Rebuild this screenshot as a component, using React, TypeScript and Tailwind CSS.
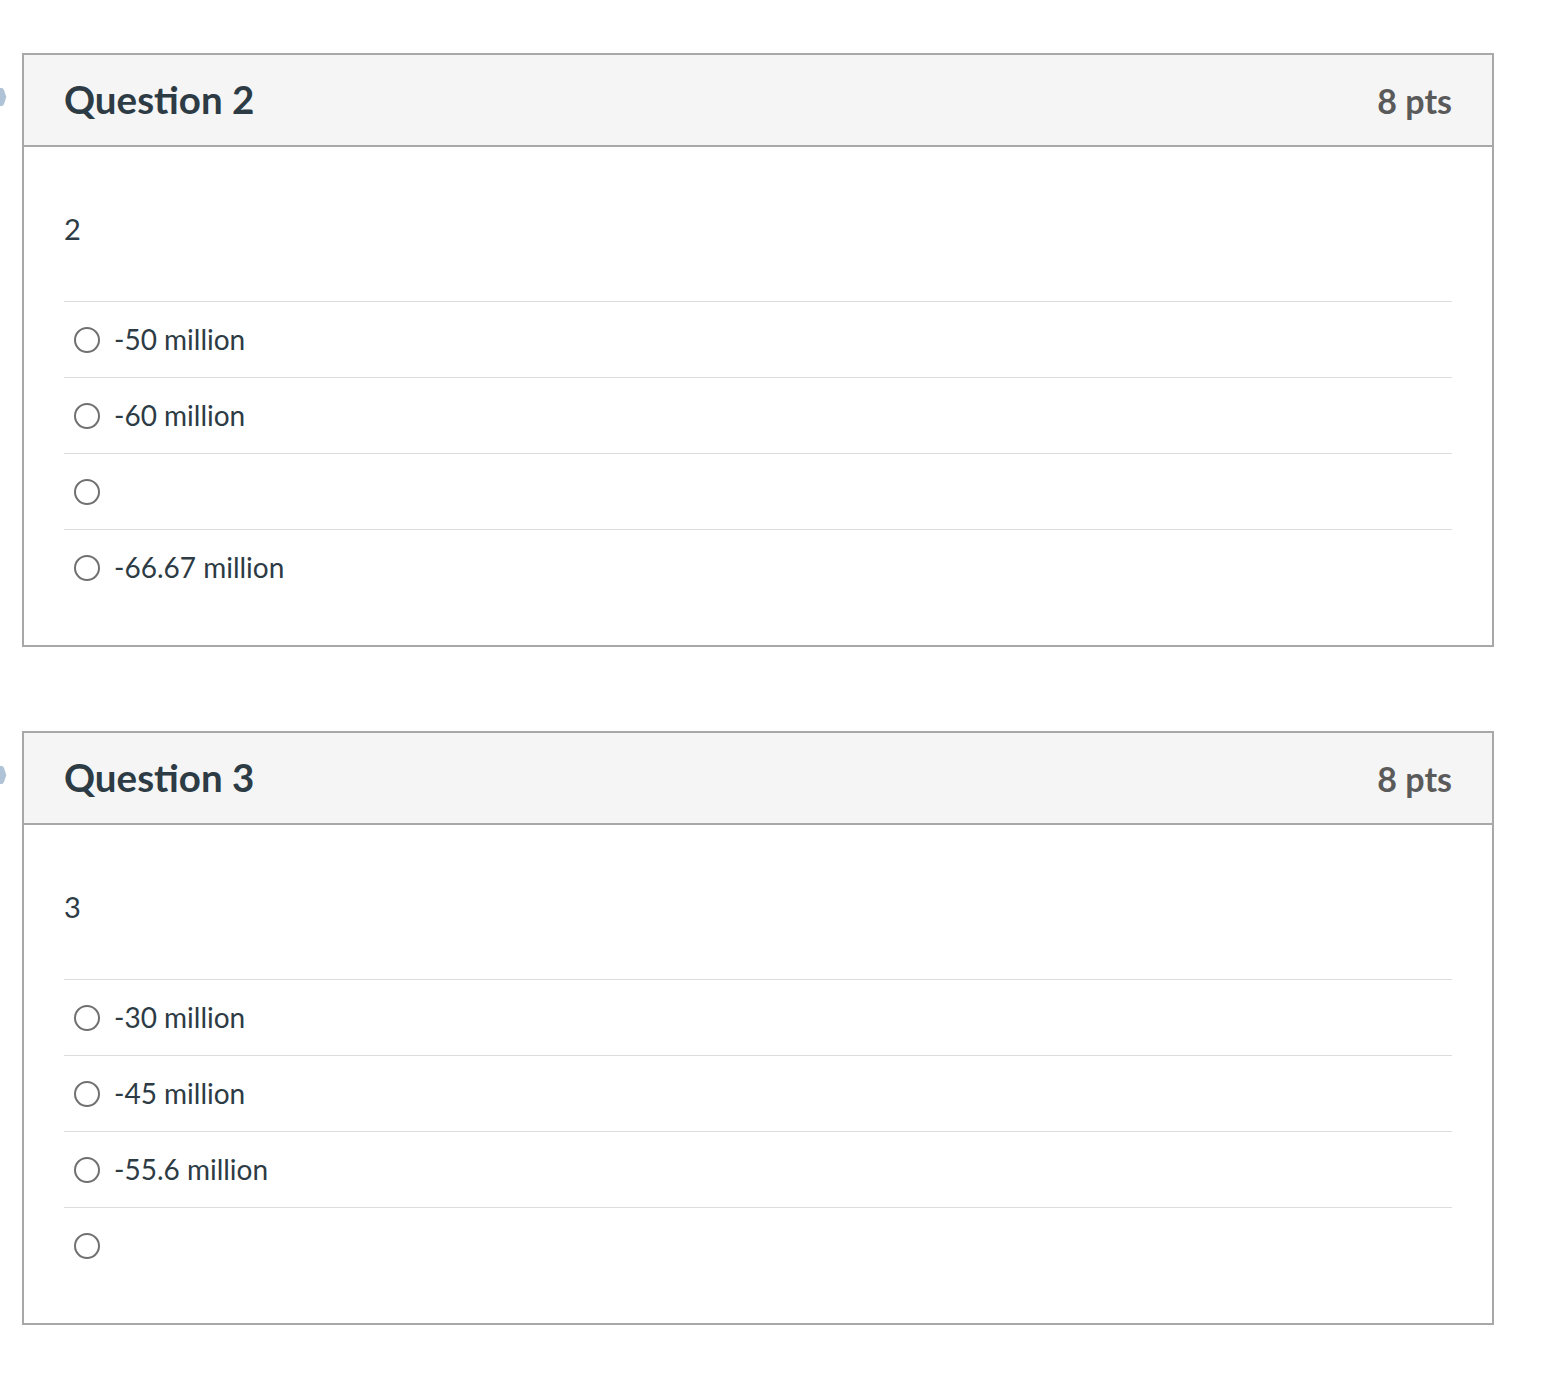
type Question = { id: number; text: string; points: number; answers: string[] };

const questions: Question[] = [
  { id: 2, text: "2", points: 8, answers: ["-50 million", "-60 million", "", "-66.67 million"] },
  { id: 3, text: "3", points: 8, answers: ["-30 million", "-45 million", "-55.6 million", ""] },
];

// only the tip of the flag shows at the page edge
function FlagMarker() {
  return (
    <svg className="absolute left-[-24px] top-[32px] blur-[0.6px]" width="7" height="20" viewBox="0 0 7 20">
      <path d="M0 1 H2 Q3 1 4 3 L6 9 Q6.5 10 6 11 L4 17 Q3 19 2 19 H0 Z" fill="#8ea9c4" opacity="0.7" />
    </svg>
  );
}

function QuestionCard({ q }: { q: Question }) {
  return (
    <div className="relative w-[1472px] border-2 border-[#a8a8a8] bg-white">
      <FlagMarker />
      <div className="flex h-[92px] items-center justify-between border-b-2 border-[#a8a8a8] bg-[#f5f5f5] px-[40px]">
        <h2 className="text-[38.5px] font-bold text-[#2d3b45]">Question {q.id}</h2>
        <span className="text-[34px] font-bold text-[#5a5a5a]">{q.points} pts</span>
      </div>
      <div className="px-[40px] pt-[62px] pb-[40px]">
        <p className="mb-[52px] text-[29px] leading-[40px] text-[#2d3b45]">{q.text}</p>
        {q.answers.map((a, i) => (
          <label key={i} className="flex h-[76px] items-center gap-[14px] border-t border-[#dcdcdc] pl-[10px]">
            <span className="h-[26px] w-[26px] rounded-full border-2 border-[#707070] bg-white" />
            <span className="pb-[2px] text-[28px] text-[#2d3b45]">{a}</span>
          </label>
        ))}
      </div>
    </div>
  );
}

export default function App() {
  return (
    <div className="min-h-screen bg-white pl-[22px] pt-[53px] font-['Lato',sans-serif]">
      <div className="flex flex-col gap-[84px]">
        {questions.map((q) => (
          <QuestionCard key={q.id} q={q} />
        ))}
      </div>
    </div>
  );
}
